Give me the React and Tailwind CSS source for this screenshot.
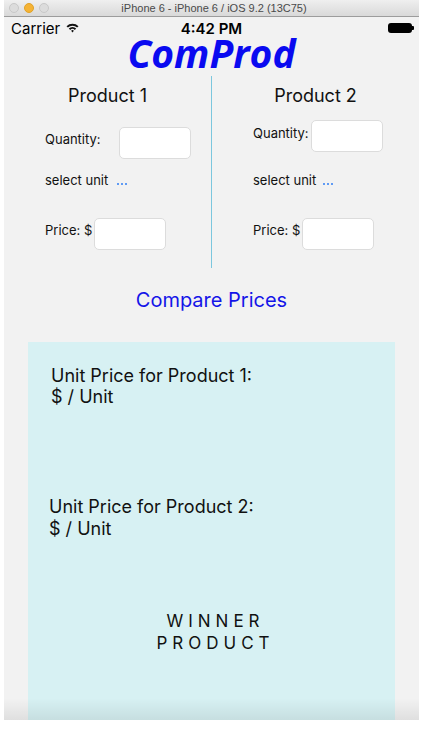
import React from "react";

function Field({ labelW, label }) {
  return (
    <div className="flex items-center">
      <span className={"whitespace-nowrap " + labelW}>{label}</span>
      <div className="w-[72px] h-[32px] bg-white border border-[#dcdcdc] rounded-[5px] shrink-0"></div>
    </div>
  );
}

function Dots() {
  return (
    <div className="flex gap-[2px] mt-[12px]">
      <span className="w-[2px] h-[2px] rounded-full bg-[#2f7ef5]"></span>
      <span className="w-[2px] h-[2px] rounded-full bg-[#2f7ef5]"></span>
      <span className="w-[2px] h-[2px] rounded-full bg-[#2f7ef5]"></span>
    </div>
  );
}

export default function App() {
  return (
    <div className="w-[422px] h-[750px] bg-white overflow-hidden" style={{ fontFamily: "Inter, 'Noto Sans', sans-serif" }}>
      <div className="ml-[4px] w-[415px] h-[720px] flex flex-col relative">
        {/* title bar */}
        <div className="h-[17px] flex items-center relative bg-gradient-to-b from-[#efefef] to-[#d9d9d9] border-b border-[#9c9c9c]">
          <div className="flex items-center gap-[5px] pl-[5px]">
            <span className="w-[10px] h-[10px] rounded-full bg-[#dcdcdc] border border-[#c8c8c8]"></span>
            <span className="w-[10px] h-[10px] rounded-full bg-[#f5b335] border border-[#e0a228]"></span>
            <span className="w-[10px] h-[10px] rounded-full bg-[#dcdcdc] border border-[#c8c8c8]"></span>
          </div>
          <div className="flex-1 text-center text-[11px] text-[#4a4a4a] pr-[40px] leading-none" style={{ fontFamily: "'Liberation Sans', sans-serif" }}>
            iPhone 6 - iPhone 6 / iOS 9.2 (13C75)
          </div>
        </div>
        {/* screen */}
        <div className="flex-1 bg-[#f2f2f2] flex flex-col overflow-hidden">
          {/* status bar */}
          <div className="h-[20px] flex items-center px-[7px] text-[15px] text-black relative mt-[1px]">
            <span className="leading-none">Carrier</span>
            <svg className="ml-[6px]" width="13" height="10" viewBox="0 0 13 10">
              <path d="M0.5 3.2 A8.5 8.5 0 0 1 12.5 3.2 L11.1 4.6 A6.5 6.5 0 0 0 1.9 4.6 Z" fill="#111" />
              <path d="M2.8 5.5 A5.2 5.2 0 0 1 10.2 5.5 L8.8 6.9 A3.2 3.2 0 0 0 4.2 6.9 Z" fill="#111" />
              <path d="M5.1 7.8 A2 2 0 0 1 7.9 7.8 L6.5 9.4 Z" fill="#111" />
            </svg>
            <span className="absolute left-0 right-0 text-center font-semibold leading-none pointer-events-none">4:42 PM</span>
            <div className="ml-auto flex items-center -mr-[2px]">
              <div className="w-[24px] h-[10px] rounded-[3px] bg-black"></div>
              <div className="w-[2px] h-[4px] bg-black rounded-r-[1px]"></div>
            </div>
          </div>
          {/* logo */}
          <div className="text-center text-[#0a0af0] font-bold italic text-[39px] leading-[34px] -mt-[2px]" style={{ fontFamily: "'Open Sans', sans-serif" }}>
            ComProd
          </div>
          {/* columns */}
          <div className="flex mt-[6px] h-[192px]">
            <div className="w-[207px] flex flex-col text-[13px] text-[#111] pl-[41px]">
              <div className="text-[18px] leading-[24px] text-center pr-[41px] mt-[8px]">Product 1</div>
              <div className="mt-[19px]">
                <Field labelW="w-[74px] -mt-[6px]" label="Quantity:" />
              </div>
              <div className="flex items-start mt-[12px]">
                <span className="w-[72px] leading-[18px] whitespace-nowrap">select unit</span>
                <Dots />
              </div>
              <div className="mt-[29px]">
                <Field labelW="w-[49px] -mt-[6px]" label="Price: $" />
              </div>
            </div>
            <div className="w-[1px] bg-[#7cc7de]"></div>
            <div className="flex-1 flex flex-col text-[13px] text-[#111] pl-[41px]">
              <div className="text-[18px] leading-[24px] text-center pr-[41px] mt-[8px]">Product 2</div>
              <div className="mt-[12px]">
                <Field labelW="w-[58px] -mt-[4px]" label="Quantity:" />
              </div>
              <div className="flex items-start mt-[19px]">
                <span className="w-[70px] leading-[18px] whitespace-nowrap">select unit</span>
                <Dots />
              </div>
              <div className="mt-[29px]">
                <Field labelW="w-[49px] -mt-[6px]" label="Price: $" />
              </div>
            </div>
          </div>
          {/* compare */}
          <div className="text-center text-[20px] leading-[26px] text-[#1515e8] mt-[19px]">Compare Prices</div>
          {/* result */}
          <div className="ml-[24px] w-[367px] flex-1 bg-[#d7f1f3] mt-[29px] flex flex-col text-[18px] text-[#111]">
            <div className="pl-[23px] mt-[23px] leading-[21px]">
              <div>Unit Price for Product 1:</div>
              <div>$ / Unit</div>
            </div>
            <div className="pl-[21px] mt-[89px] leading-[22px]">
              <div>Unit Price for Product 2:</div>
              <div>$ / Unit</div>
            </div>
            <div className="text-center text-[17px] leading-[22px] tracking-[5px] mt-[70px] pl-[8px]">
              <div>WINNER</div>
              <div>PRODUCT</div>
            </div>
          </div>
        </div>
        <div className="absolute left-0 right-0 bottom-0 h-[22px] bg-gradient-to-b from-transparent to-[#00000014] pointer-events-none"></div>
      </div>
    </div>
  );
}
